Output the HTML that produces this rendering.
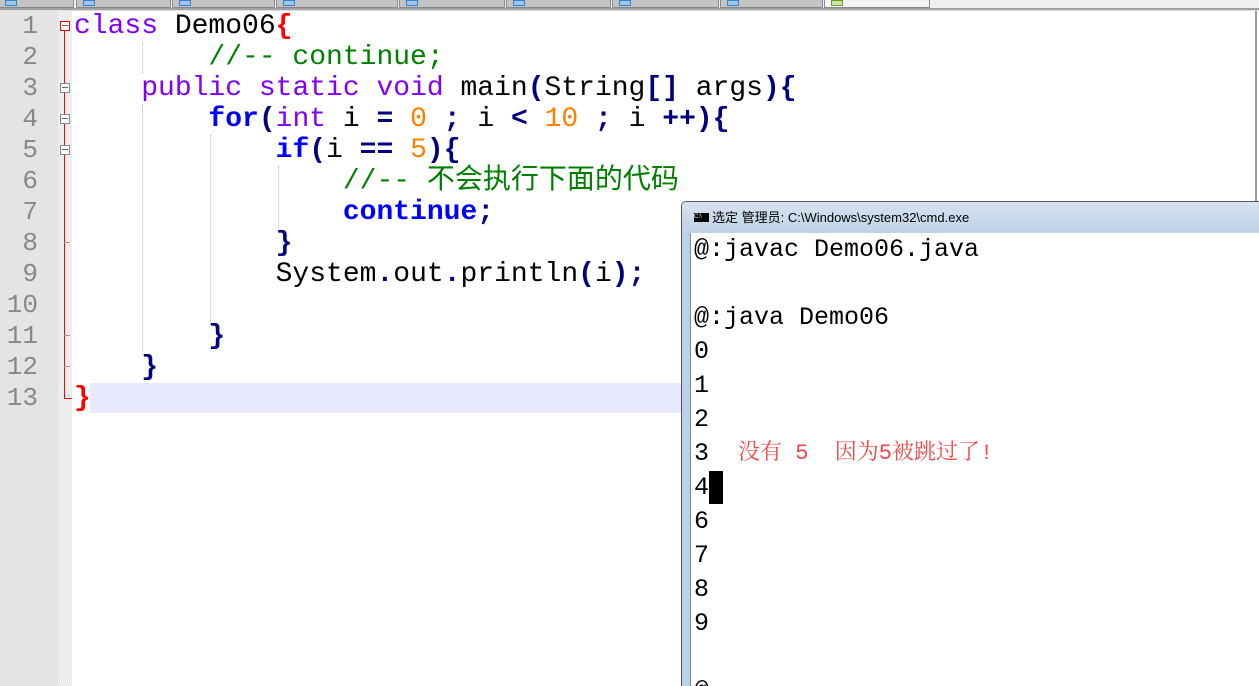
<!DOCTYPE html>
<html style="overflow:hidden;width:1259px;height:686px"><head><meta charset="utf-8"><style>
*{margin:0;padding:0;box-sizing:border-box}
body{width:1259px;height:686px;overflow:hidden;background:#fff;position:relative;font-family:"Liberation Mono",monospace}
.tabs{position:absolute;left:0;top:0;width:1259px;height:9px;background:#f0f0f0}
.tab{position:absolute;top:0;height:8px;background:#c4c4c4;border:1px solid #888;border-top:none;}
.tab i{position:absolute;left:6px;top:0;width:12px;height:6px;border:1px solid #3a7fc8;background:#9cc8ec}
.sep{position:absolute;left:0;top:8px;width:1259px;height:3px;background:#a0a0a0;border-bottom:1px solid #e0e0e0}
.gut{position:absolute;left:0;top:11px;width:58px;height:675px;background:#e4e4e4}
.fold{position:absolute;left:58px;top:11px;width:14px;height:675px;background:repeating-conic-gradient(#f4f4f4 0 25%,#e6e6e6 0 50%) 0 0/2px 2px}
.ln{position:absolute;left:0;width:38px;text-align:right;color:#888;font-size:26px;line-height:31px;height:31px}
.code{position:absolute;left:74px;font-size:28px;line-height:31px;height:31px;white-space:pre;color:#000}
.k{color:#8000ff}.b{color:#0000ff;font-weight:bold}.c{color:#008000}.n{color:#ff8000}.o{color:#000080;font-weight:bold}.r{color:red;font-weight:bold}
.cjk{font-family:"Liberation Mono","Noto Sans CJK SC",sans-serif}
.fb{position:absolute;left:60px;width:10px;height:10px;border:1px solid #888;background:#fff}
.fb::after{content:"";position:absolute;left:1px;top:3px;width:6px;height:1px;background:#666}
.guide{position:absolute;width:0;border-left:1px dotted #bbb}
.cmd{position:absolute;left:681px;top:201px;width:590px;height:485px;background:#b9d1ea;border:1px solid #555;border-bottom:none;border-radius:5px 0 0 0;overflow:hidden}
.title{position:absolute;left:0;top:0;width:100%;height:31px;background:linear-gradient(#d6e2ef,#bfd2e8);font-family:"Liberation Sans","Noto Sans CJK SC",sans-serif;font-size:13px;line-height:31px;padding-left:30px;color:#000}
.ico{position:absolute;left:12px;top:11px;width:15px;height:9px;background:#000;color:#fff;font-size:6px;line-height:9px}
.con{position:absolute;left:8px;top:31px;width:600px;height:460px;background:#fff;border-left:1px solid #888}
.cl{position:absolute;left:3px;font-family:"Liberation Mono","Noto Serif CJK SC",serif;font-size:25px;line-height:34px;height:34px;white-space:pre;color:#000}
</style></head><body>
<div class="tabs">
<div class="tab" style="left:-2px;width:76px"><i></i></div>
<div class="tab" style="left:76px;width:95px"><i></i></div>
<div class="tab" style="left:172px;width:103px"><i></i></div>
<div class="tab" style="left:276px;width:122px"><i></i></div>
<div class="tab" style="left:399px;width:106px"><i></i></div>
<div class="tab" style="left:506px;width:105px"><i></i></div>
<div class="tab" style="left:612px;width:107px"><i></i></div>
<div class="tab" style="left:720px;width:103px"><i></i></div>
<div class="tab" style="left:824px;width:106px;background:#f4f4f4"><i style="border-color:#6a9a3a;background:#c8e6a0"></i></div>
</div>
<div class="sep"></div>
<div style="position:absolute;left:1255px;top:11px;width:2px;height:190px;background:#999"></div>
<div class="gut"></div><div class="fold"></div>
<div style="position:absolute;left:90px;top:383px;width:592px;height:30px;background:#e8e8ff"></div>
<div style="position:absolute;left:64px;top:30px;width:1px;height:369px;background:red"></div>
<div style="position:absolute;left:64px;top:398px;width:8px;height:1px;background:red"></div>
<div class="fb" style="top:21px;border-color:red"></div>
<div class="fb" style="top:83px"></div>
<div class="fb" style="top:114px"></div>
<div class="fb" style="top:145px"></div>
<div style="position:absolute;left:64px;top:242px;width:6px;height:1px;background:#999"></div>
<div style="position:absolute;left:64px;top:335px;width:6px;height:1px;background:#999"></div>
<div style="position:absolute;left:64px;top:366px;width:6px;height:1px;background:#999"></div>
<div class="guide" style="left:142px;top:42px;height:31px"></div>
<div class="guide" style="left:142px;top:104px;height:250px"></div>
<div class="guide" style="left:210px;top:135px;height:190px"></div>
<div class="guide" style="left:278px;top:166px;height:60px"></div>

<div class="ln" style="top:11px">1</div><div class="ln" style="top:42px">2</div><div class="ln" style="top:73px">3</div><div class="ln" style="top:104px">4</div><div class="ln" style="top:135px">5</div><div class="ln" style="top:166px">6</div><div class="ln" style="top:197px">7</div><div class="ln" style="top:228px">8</div><div class="ln" style="top:259px">9</div><div class="ln" style="top:290px">10</div><div class="ln" style="top:321px">11</div><div class="ln" style="top:352px">12</div><div class="ln" style="top:383px">13</div>

<div class="code" style="top:11px"><span class="k">class</span> Demo06<span class="r">{</span></div>
<div class="code" style="top:42px">        <span class="c">//-- continue;</span></div>
<div class="code" style="top:73px">    <span class="k">public static void</span> main<span class="o">(</span>String<span class="o">[]</span> args<span class="o">){</span></div>
<div class="code" style="top:104px">        <span class="b">for</span><span class="o">(</span><span class="k">int</span> i <span class="o">=</span> <span class="n">0</span> <span class="o">;</span> i <span class="o">&lt;</span> <span class="n">10</span> <span class="o">;</span> i <span class="o">++){</span></div>
<div class="code" style="top:135px">            <span class="b">if</span><span class="o">(</span>i <span class="o">==</span> <span class="n">5</span><span class="o">){</span></div>
<div class="code cjk" style="top:166px">                <span class="c">//-- 不会执行下面的代码</span></div>
<div class="code" style="top:197px">                <span class="b">continue</span><span class="o">;</span></div>
<div class="code" style="top:228px">            <span class="o">}</span></div>
<div class="code" style="top:259px">            System<span class="o">.</span>out<span class="o">.</span>println<span class="o">(</span>i<span class="o">);</span></div>
<div class="code" style="top:321px">        <span class="o">}</span></div>
<div class="code" style="top:352px">    <span class="o">}</span></div>
<div class="code" style="top:383px"><span class="r">}</span></div>

<div class="cmd">
<div class="title"><span class="ico">C:\</span>选定 管理员: C:\Windows\system32\cmd.exe</div>
<div class="con">
<div class="cl" style="top:0">@:javac Demo06.java</div>
<div class="cl" style="top:68px">@:java Demo06</div>
<div class="cl" style="top:102px">0</div>
<div class="cl" style="top:136px">1</div>
<div class="cl" style="top:170px">2</div>
<div class="cl" style="top:204px">3</div>
<div class="cl" style="top:204px;left:47px;color:#f04848;font-size:22px">没有 5  因为5被跳过了!</div>
<div class="cl" style="top:238px">4<span style="display:inline-block;width:14px;height:33px;background:#000;vertical-align:middle"></span></div>
<div class="cl" style="top:272px">6</div>
<div class="cl" style="top:306px">7</div>
<div class="cl" style="top:340px">8</div>
<div class="cl" style="top:374px">9</div>
<div class="cl" style="top:442px">@</div>
</div></div>
</body></html>
